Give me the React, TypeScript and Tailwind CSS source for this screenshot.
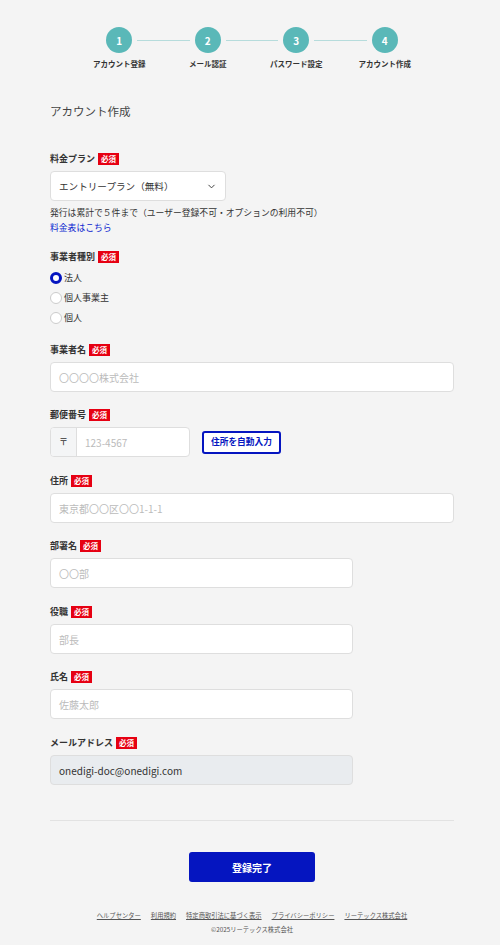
import { ChevronDown } from 'lucide-react';

const steps = ['アカウント登録', 'メール認証', 'パスワード設定', 'アカウント作成'];

function Required() {
  return (
    <span className="ml-[3px] bg-[#e60012] px-[3px] text-[7.5px] leading-[12px] font-bold text-white">必須</span>
  );
}

function Label({ text }: { text: string }) {
  return (
    <div className="flex items-center h-[14px] mb-[5px]">
      <span className="text-[9px] font-bold text-[#333]">{text}</span>
      <Required />
    </div>
  );
}

function TextField({ placeholder, wide = true }: { placeholder: string; wide?: boolean }) {
  return (
    <div
      className={`h-[30px] ${wide ? 'w-full' : 'w-[303px]'} rounded-[4px] border border-[#dedede] bg-white px-[8px] flex items-center text-[10px] text-[#bbb]`}
    >
      {placeholder}
    </div>
  );
}

export default function App() {
  return (
    <div className="h-[945px] overflow-hidden bg-[#f4f4f4] font-['Noto_Sans_CJK_JP','Noto_Sans',sans-serif] text-[#333]">
      {/* Stepper */}
      <div className="pt-[27px] pl-[4px] flex justify-center">
        <div className="grid grid-cols-4 w-[354px]">
          {steps.map((s, i) => (
            <div key={s} className="flex flex-col items-center">
              <div className="flex w-full items-center">
                <div className={`flex-1 h-px mr-[5px] ${i === 0 ? '' : 'bg-[#b6dcdc]'}`} />
                <div className="w-[26px] h-[26px] rounded-full bg-[#5ab8b8] flex items-center justify-center text-white text-[10px] font-bold">
                  {i + 1}
                </div>
                <div className={`flex-1 h-px ml-[5px] ${i === 3 ? '' : 'bg-[#b6dcdc]'}`} />
              </div>
              <div className="mt-[5px] text-[7.5px] font-bold text-[#333] leading-[12px]">{s}</div>
            </div>
          ))}
        </div>
      </div>

      <div className="pl-[50px] pr-[46px]">
        <h1 className="mt-[31px] text-[11.5px] text-[#444] leading-[20px]">アカウント作成</h1>

        {/* Plan */}
        <div className="mt-[31px]">
          <Label text="料金プラン" />
          <div className="h-[30px] w-[176px] rounded-[4px] border border-[#dedede] bg-white flex items-center justify-between px-[8px] text-[9.6px] text-[#333]">
            <span>エントリープラン（無料）</span>
            <ChevronDown className="w-[11px] h-[11px] text-[#333]" strokeWidth={2} />
          </div>
          <p className="mt-[4px] text-[8.8px] leading-[15px] text-[#333]">
            発行は累計で５件まで（ユーザー登録不可・オプションの利用不可）
          </p>
          <a className="block text-[8.8px] leading-[15px] text-[#0a1ed0]">料金表はこちら</a>
        </div>

        {/* Business type */}
        <div className="mt-[15px]">
          <div className="flex items-center h-[14px] mb-[4px]">
            <span className="text-[9px] font-bold text-[#333]">事業者種別</span>
            <Required />
          </div>
          {['法人', '個人事業主', '個人'].map((r, i) => (
            <div key={r} className="flex items-center h-[20px] gap-[2px]">
              {i === 0 ? (
                <span className="w-[12px] h-[12px] rounded-full border-[3px] border-[#0515c0] bg-white" />
              ) : (
                <span className="w-[12px] h-[12px] rounded-full border border-[#ccc] bg-white" />
              )}
              <span className="text-[9px] text-[#333]">{r}</span>
            </div>
          ))}
        </div>

        <div className="mt-[15px]">
          <Label text="事業者名" />
          <TextField placeholder="〇〇〇〇株式会社" />
        </div>

        <div className="mt-[16px]">
          <Label text="郵便番号" />
          <div className="flex items-center gap-[12px]">
            <div className="flex h-[30px] w-[140px] rounded-[4px] border border-[#dedede] bg-white overflow-hidden">
              <div className="w-[26px] bg-[#f4f5f6] border-r border-[#dedede] flex items-center justify-center text-[9px] text-[#333]">〒</div>
              <div className="flex-1 px-[8px] flex items-center text-[10px] text-[#bbb]">123-4567</div>
            </div>
            <div className="h-[23px] px-[7px] rounded-[3px] border-2 border-[#0515c0] bg-white flex items-center text-[8.7px] font-bold text-[#0515c0]">
              住所を自動入力
            </div>
          </div>
        </div>

        <div className="mt-[17px]">
          <Label text="住所" />
          <TextField placeholder="東京都〇〇区〇〇1-1-1" />
        </div>

        <div className="mt-[16px]">
          <Label text="部署名" />
          <TextField placeholder="〇〇部" wide={false} />
        </div>

        <div className="mt-[17px]">
          <Label text="役職" />
          <TextField placeholder="部長" wide={false} />
        </div>

        <div className="mt-[16px]">
          <Label text="氏名" />
          <TextField placeholder="佐藤太郎" wide={false} />
        </div>

        <div className="mt-[17px]">
          <Label text="メールアドレス" />
          <div className="h-[30px] w-[303px] rounded-[4px] border border-[#dedede] bg-[#e9ecef] px-[8px] flex items-center text-[10px] text-[#333]">
            onedigi-doc@onedigi.com
          </div>
        </div>

        <div className="mt-[35px] border-t border-[#e2e2e2]" />

        <div className="mt-[31px] flex justify-center">
          <button className="w-[126px] h-[30px] rounded-[3px] bg-[#0515c0] text-white text-[10px] font-bold">登録完了</button>
        </div>

        <div className="mt-[29px] flex justify-center gap-[10px] text-[6.3px] leading-[10px] text-[#555]">
          {['ヘルプセンター', '利用規約', '特定商取引法に基づく表示', 'プライバシーポリシー', 'リーテックス株式会社'].map((l) => (
            <a key={l} className="underline">{l}</a>
          ))}
        </div>
        <div className="mt-[4px] text-center text-[6.3px] leading-[10px] text-[#555]">©2025リーテックス株式会社</div>
      </div>
    </div>
  );
}
